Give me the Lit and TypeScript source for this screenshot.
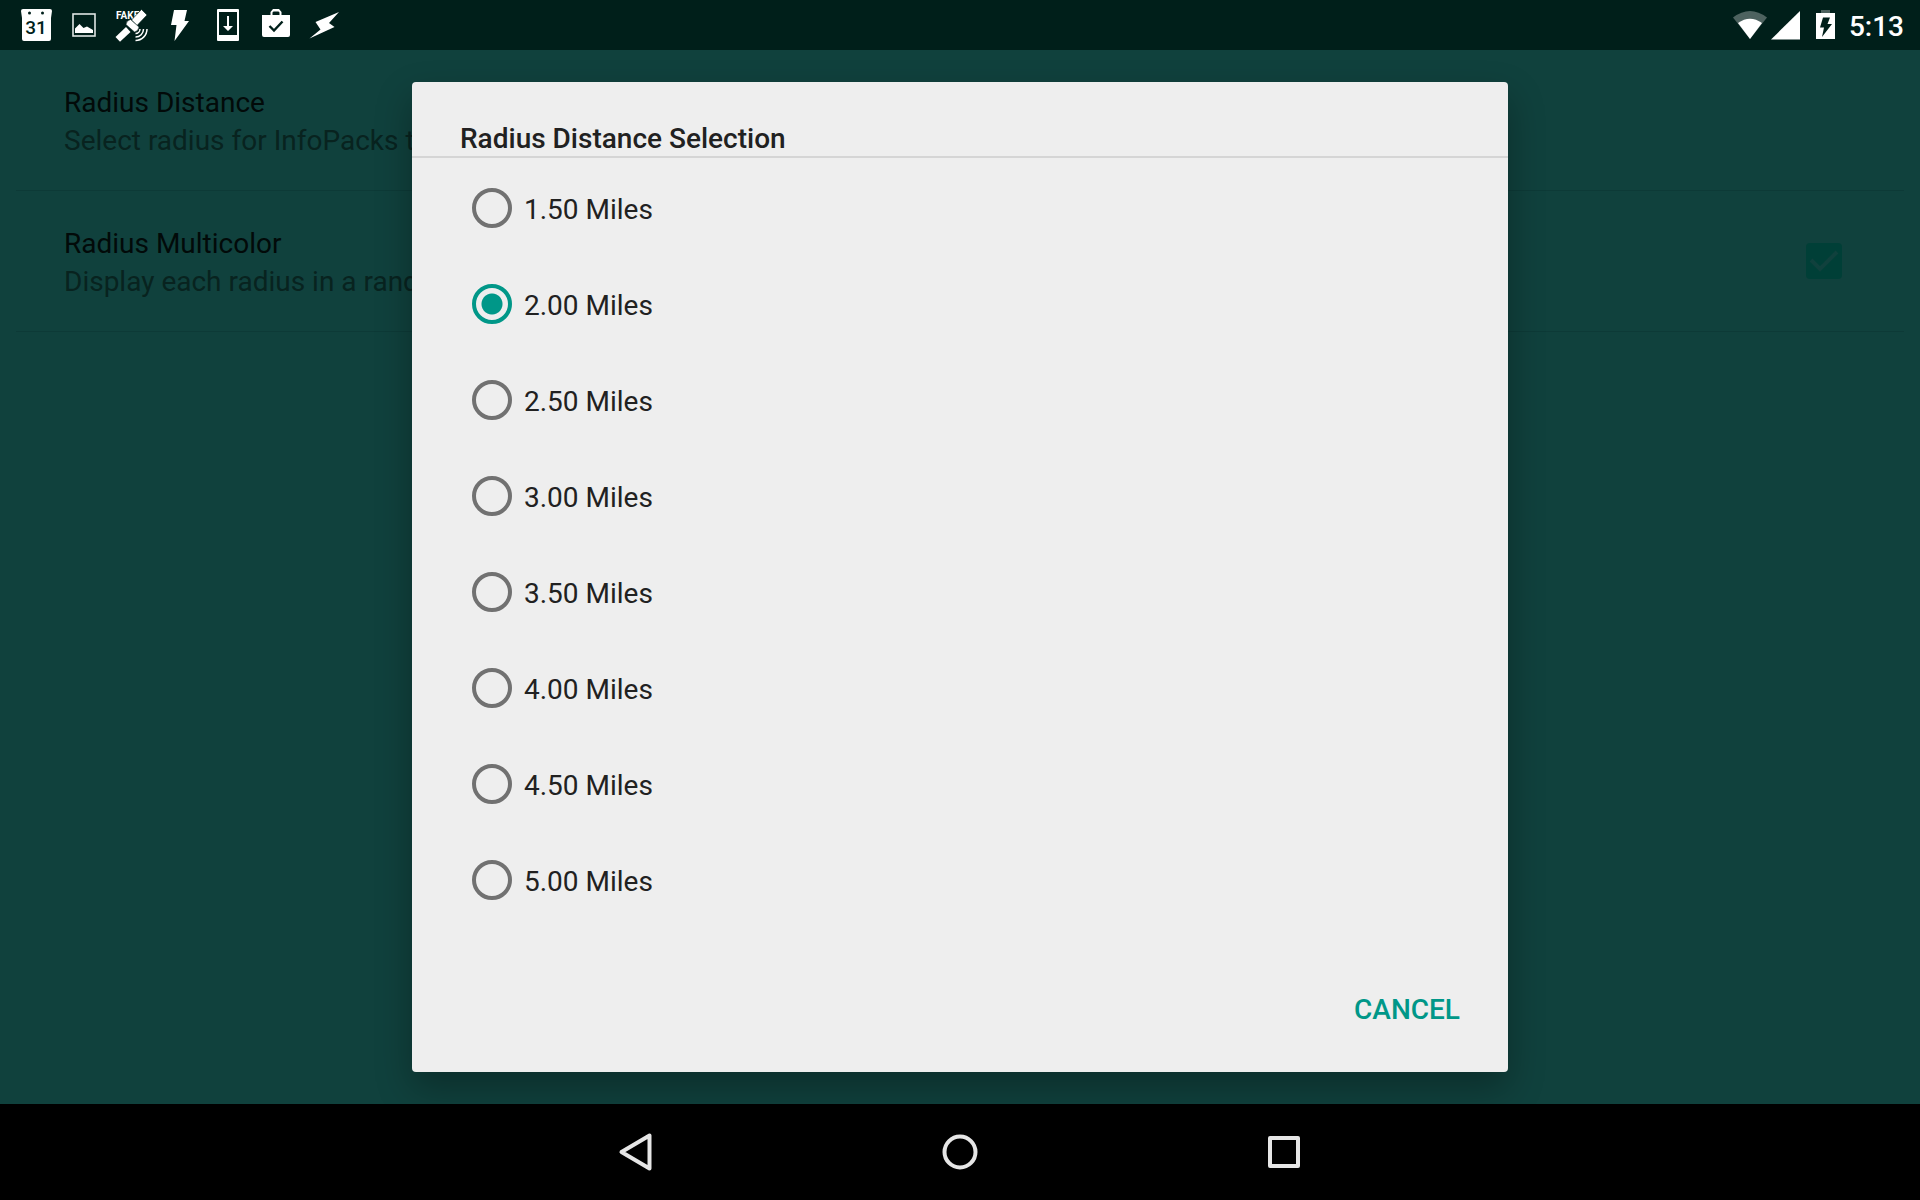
import { LitElement, html, css, svg } from "lit";
import { customElement, property, state } from "lit/decorators.js";

const BAR = "#001f1a";

@customElement("status-bar")
class StatusBar extends LitElement {
  static styles = css`
    :host {
      display: flex;
      justify-content: space-between;
      align-items: center;
      height: 50px;
      padding: 0 16px 0 12px;
      background: #001f1a;
      color: #fff;
    }
    .notifications,
    .system {
      display: flex;
      align-items: center;
    }
    svg {
      display: block;
      flex: none;
    }
    .signal {
      margin: 0 16px 0 4px;
    }
    .time {
      margin-left: 14px;
      padding-top: 4px;
      font-size: 28px;
      line-height: 32px;
      font-weight: 500;
    }
  `;

  private icon(label: string, content: unknown) {
    return html`<svg width="48" height="50" viewBox="0 0 48 50" role="img" aria-label=${label} fill="#fff">${content}</svg>`;
  }

  render() {
    return html`
      <div class="notifications">
        ${this.icon(
          "Calendar",
          svg`<path d="M11 9H38Q40 9 40 11L39 18V39Q39 41 37 41H12Q10 41 10 39V18L9 11Q9 9 11 9Z"/>
            <circle cx="17.5" cy="13" r="1.5" fill=${BAR}/><circle cx="30.5" cy="13" r="1.5" fill=${BAR}/>
            <text x="24" y="34" text-anchor="middle" font-family="Roboto" font-weight="500" font-size="19" fill=${BAR}>31</text>`
        )}
        ${this.icon(
          "Screenshot",
          svg`<rect x="13" y="14" width="22" height="22" fill="none" stroke="#dfe5e4" stroke-width="1.6"/>
            <path d="M15 33V28.5L19.5 24L23.5 28L27 26.5L33 30V33Z"/>`
        )}
        ${this.icon(
          "Fake GPS",
          svg`<text x="8" y="18.5" font-family="Roboto" font-weight="700" font-size="10">FAKE</text>
            <path stroke=${BAR} stroke-width="0.6" d="M33.5 9.5L39 15L29 25.5L23.5 20Z"/>
            <path d="M7.500 37L12 41.700L22.500 32L18 27Z"/>
            <path stroke=${BAR} stroke-width="0.5" d="M22.500 19.500L31 27Q30.500 31 26.500 32L18 24.500Q18.500 20.500 22.500 19.500Z"/>
            <path fill="none" stroke="#fff" stroke-width="1.5" d="M32 29A4.500 4.500 0 0 1 27.500 33.500M35.500 29A8 8 0 0 1 27.500 37M39 29A11.500 11.500 0 0 1 27.500 40.500"/>`
        )}
        ${this.icon("Charging", svg`<path d="M18 10H31L28.500 21H33L18.500 41L20.500 25H15Z"/>`)}
        ${this.icon(
          "System update",
          svg`<path fill-rule="evenodd" d="M14 9H34Q35 9 35 10V40Q35 41 34 41H14Q13 41 13 40V10Q13 9 14 9ZM15 12V35H33V12Z"/>
            <path d="M23 16H25V26H29L24 31L19 26H23Z"/>`
        )}
        ${this.icon(
          "Apps updated",
          svg`<path fill-rule="evenodd" d="M10 15H18.500V12L21 9H27L29.500 12V15H38V35Q38 37 36 37H12Q10 37 10 35ZM20.500 15H27.500V12.500L26.500 11.500H21.500L20.500 12.500Z"/>
            <path d="M17.500 26L22 30.500L30.500 21.500" fill="none" stroke=${BAR} stroke-width="2.400"/>`
        )}
        ${this.icon(
          "Power",
          svg`<defs><filter id="soft"><feGaussianBlur stdDeviation="0.6"/></filter></defs>
            <path filter="url(#soft)" d="M39 12L29 23L34.500 27L9.500 38.500L20.500 29.500L15.500 22Z"/>`
        )}
      </div>
      <div class="system">
        <svg width="34" height="30" viewBox="0 0 34 30" role="img" aria-label="Wi-Fi">
          <path fill="#4d625f" d="M17 29L0 7.500Q17 -5.500 34 7.500Z" />
          <path fill="#fff" d="M17 29L5 13Q17 4.500 29 13Z" />
        </svg>
        <svg class="signal" width="29" height="30" viewBox="0 0 29 30" role="img" aria-label="Cell signal">
          <path fill="#fff" d="M29 1V29.500H0Z" />
        </svg>
        <svg width="19" height="30" viewBox="0 0 19 30" role="img" aria-label="Battery charging">
          <path fill="#4d625f" d="M5 0H14V3H5Z" />
          <path fill="#fff" d="M0 3H19V29H0Z" />
          <path fill="#001f1a" d="M7 7.500H14L11.500 14H16L6 27L8 17.500H4Z" />
        </svg>
        <span class="time">5:13</span>
      </div>
    `;
  }
}

@customElement("settings-list")
class SettingsList extends LitElement {
  static styles = css`
    :host {
      display: block;
      padding: 0 16px;
    }
    .row {
      display: flex;
      align-items: center;
      justify-content: space-between;
      height: 141px;
      box-sizing: border-box;
      padding: 0 62px 0 48px;
      border-bottom: 1px solid #0d3a37;
      font-size: 28px;
      line-height: 38px;
    }
    .text {
      padding-top: 4px;
    }
    .title {
      color: #020a09;
    }
    .summary {
      color: #08231f;
    }
    .tick {
      display: grid;
    }
    .tick > * {
      grid-area: 1 / 1;
    }
    .tick svg {
      pointer-events: none;
      z-index: 1;
    }
    .check {
      appearance: none;
      width: 36px;
      height: 36px;
      margin: 0;
      border-radius: 4px;
      background: #003f37;
    }
  `;

  render() {
    return html`
      <div class="row">
        <div class="text">
          <div class="title">Radius Distance</div>
          <div class="summary">Select radius for InfoPacks to</div>
        </div>
      </div>
      <div class="row">
        <label class="text" for="multicolor">
          <div class="title">Radius Multicolor</div>
          <div class="summary">Display each radius in a random color</div>
        </label>
        <span class="tick">
          <input class="check" id="multicolor" type="checkbox" checked />
          <svg width="36" height="36" viewBox="0 0 36 36" aria-hidden="true">
            <path d="M5 17L14 26L31 9" fill="none" stroke="#10413d" stroke-width="4" />
          </svg>
        </span>
      </div>
    `;
  }
}

@customElement("radius-dialog")
class RadiusDialog extends LitElement {
  static styles = css`
    :host {
      display: block;
      background: #eee;
      border-radius: 4px;
      color: #212121;
      box-shadow: 0 16px 36px rgba(0, 0, 0, 0.3);
    }
    h2 {
      margin: 0;
      padding: 40px 48px 0;
      font-size: 28px;
      line-height: 34px;
      font-weight: 500;
      border-bottom: 2px solid #d5d5d5;
    }
    .options {
      border: 0;
      margin: 0;
      padding: 2px 0 32px;
    }
    .option {
      display: flex;
      align-items: center;
      gap: 12px;
      height: 96px;
      padding: 0 60px;
      font-size: 28px;
      line-height: 32px;
    }
    .option input {
      appearance: none;
      box-sizing: border-box;
      width: 40px;
      height: 40px;
      margin: 0;
      border: 4px solid #717171;
      border-radius: 50%;
    }
    .option input:checked {
      border-color: #009788;
      background: radial-gradient(circle, #009788 10px, transparent 11px);
    }
    .option span {
      padding-top: 4px;
    }
    .actions {
      display: flex;
      justify-content: flex-end;
      padding: 0 32px 16px;
    }
    button {
      border: 0;
      background: none;
      padding: 4px 16px 0;
      height: 96px;
      font: 500 28px/32px Roboto, sans-serif;
      color: #009788;
      text-transform: uppercase;
    }
  `;

  @property({ type: Array }) values: string[] = [];
  @state() private selected = "2.00";

  render() {
    return html`
      <h2 id="heading">Radius Distance Selection</h2>
      <fieldset class="options" aria-labelledby="heading">
        ${this.values.map(
          (v) => html`<label class="option">
            <input
              type="radio"
              name="radius"
              .checked=${v === this.selected}
              @change=${() => (this.selected = v)}
            />
            <span>${v} Miles</span>
          </label>`
        )}
      </fieldset>
      <div class="actions"><button type="button">Cancel</button></div>
    `;
  }
}

@customElement("nav-bar")
class NavBar extends LitElement {
  static styles = css`
    :host {
      display: grid;
      grid-template-columns: repeat(3, 324px);
      justify-content: center;
      height: 96px;
      background: #000;
    }
    button {
      display: grid;
      place-items: center;
      border: 0;
      padding: 0;
      background: none;
    }
  `;

  render() {
    const glyph = (label: string, shape: unknown) => html`<button type="button" aria-label=${label}>
      <svg width="48" height="48" viewBox="0 0 48 48" fill="none" stroke="#e6e6e6" stroke-width="4" stroke-linejoin="round">
        ${shape}
      </svg>
    </button>`;
    return html`
      ${glyph("Back", svg`<path d="M37.500 7.500V40.500L9.500 24Z"/>`)}
      ${glyph("Home", svg`<circle cx="24" cy="24" r="15.500"/>`)}
      ${glyph("Recent apps", svg`<rect x="10" y="10" width="28" height="28"/>`)}
    `;
  }
}

@customElement("app-root")
class AppRoot extends LitElement {
  static styles = css`
    :host {
      display: flex;
      flex-direction: column;
      min-height: 100vh;
      font-family: Roboto, sans-serif;
      background: #10413d;
    }
    .stage {
      flex: 1;
      display: grid;
      grid-template-columns: minmax(0, 1fr);
      overflow: hidden;
    }
    .stage > * {
      grid-area: 1 / 1;
    }
    .dialog {
      width: 92%;
      max-width: 1096px;
      place-self: center;
      margin: 32px 0;
      box-sizing: border-box;
      z-index: 1;
    }
  `;

  private values = ["1.50", "2.00", "2.50", "3.00", "3.50", "4.00", "4.50", "5.00"];

  render() {
    return html`
      <status-bar></status-bar>
      <main class="stage">
        <settings-list></settings-list>
        <radius-dialog class="dialog" role="dialog" .values=${this.values}></radius-dialog>
      </main>
      <nav-bar></nav-bar>
    `;
  }
}
